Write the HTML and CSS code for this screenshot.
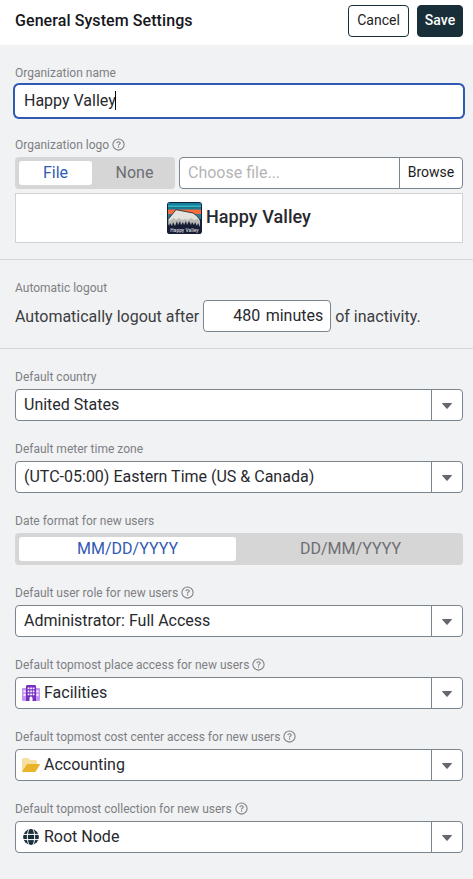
FILE: index.html
```html
<!DOCTYPE html>
<html lang="en">
<head>
<meta charset="utf-8">
<title>General System Settings</title>
<link rel="stylesheet" href="styles.css">
</head>
<body>
<svg class="defs" width="0" height="0" aria-hidden="true">
  <symbol id="help" viewBox="0 0 13 13">
    <circle cx="6.5" cy="6.5" r="5.6" fill="none" stroke="currentColor" stroke-width="1.05"/>
    <path d="M4.8 5.1C4.9 4.2 5.6 3.7 6.5 3.7S8.2 4.2 8.2 5.1C8.2 6.2 6.5 6.1 6.5 7.5" fill="none" stroke="currentColor" stroke-width="1.15"/>
    <circle cx="6.5" cy="9.1" r=".75" fill="currentColor"/>
  </symbol>
  <symbol id="caret" viewBox="0 0 10 6"><path d="M.6 0h8.8q.9 0 .3.8L5.6 5.5q-.6.6-1.2 0L.3.8Q-.3 0 .6 0z" fill="currentColor"/></symbol>
</svg>
<header class="header">
  <h1 class="title">General System Settings</h1>
  <button class="btn">Cancel</button>
  <button class="btn btn-primary">Save</button>
</header>
<main>
  <section class="section">
    <div class="field">
      <div class="label">Organization name</div>
      <div class="input focused">Happy Valley<span class="cursor"></span></div>
    </div>
    <div class="field">
      <div class="label">Organization logo<svg class="help"><use href="#help"/></svg></div>
      <div class="row">
        <div class="toggle toggle-small"><span class="option active">File</span><span class="option">None</span></div>
        <div class="input file"><span class="placeholder">Choose file...</span><span class="browse">Browse</span></div>
      </div>
      <div class="preview">
        <svg class="logo" viewBox="0 0 35 32">
          <defs><clipPath id="round"><rect width="35" height="32" rx="3"/></clipPath></defs>
          <g clip-path="url(#round)">
            <path fill="#142040" d="M0 0h35v32H0z"/>
            <path fill="#157f9f" d="M1 1h33v3H1z"/>
            <path fill="#35b4c0" d="M1 3.5h33v2H1z"/>
            <path fill="#167b98" d="M1 5.5h33v2.5H1z"/>
            <path fill="#fa6c3a" d="M1 7.5h33v4.5H1z"/>
            <path fill="#287b91" d="M1 12h33v5H1z"/>
            <path fill="#e3e2dc" stroke="#1b2038" stroke-width=".8" d="M1 17.500l8-9.800 17 3.300q4 2 7 7v6H1z"/>
            <path fill="#b9b9b5" d="M2 19l5-3 2 2 3-2 3 2 3-1 3 1 3-2 3 2 3-1 3 2v6H2z"/>
            <path fill="#171d34" d="M0 25l1-3 1 2 1-3 2 3 1-4 2 4 2-5 1 4 2-4 1 4 2-3 1 3 2-4 1 4 2-4 2 4 1-3 2 3 1-3 2 4 1-3 2 4 1-3v12H0z"/>
            <text class="logo-text" x="17.5" y="29.7" text-anchor="middle">Happy Valley</text>
          </g>
        </svg>
        <span>Happy Valley</span>
      </div>
    </div>
  </section>
  <section class="section">
    <div class="field">
      <div class="label">Automatic logout</div>
      <div class="row sentence">
        <span class="words">Automatically logout after</span>
        <div class="input minutes"><span class="number">480</span><span class="unit">minutes</span></div>
        <span class="words">of inactivity.</span>
      </div>
    </div>
  </section>
  <section class="section">
    <div class="field">
      <div class="label">Default country</div>
      <div class="input select"><span class="value">United States</span><span class="arrow"><svg><use href="#caret"/></svg></span></div>
    </div>
    <div class="field">
      <div class="label">Default meter time zone</div>
      <div class="input select"><span class="value">(UTC-05:00) Eastern Time (US &amp; Canada)</span><span class="arrow"><svg><use href="#caret"/></svg></span></div>
    </div>
    <div class="field">
      <div class="label">Date format for new users</div>
      <div class="toggle"><span class="option active">MM/DD/YYYY</span><span class="option">DD/MM/YYYY</span></div>
    </div>
    <div class="field">
      <div class="label">Default user role for new users<svg class="help"><use href="#help"/></svg></div>
      <div class="input select"><span class="value">Administrator: Full Access</span><span class="arrow"><svg><use href="#caret"/></svg></span></div>
    </div>
    <div class="field">
      <div class="label">Default topmost place access for new users<svg class="help"><use href="#help"/></svg></div>
      <div class="input select with-icon">
        <svg class="icon" viewBox="0 0 18 16">
          <path fill="#c193f2" fill-rule="evenodd" d="M1.2 3H5v13H1.2Q0 16 0 14.8V4.2Q0 3 1.2 3zM1.5 5.5v1.7h2V5.5zM1.5 9v1.7h2V9zM13 3h3.8Q18 3 18 4.2v10.6q0 1.2-1.2 1.2H13zM14.5 5.5v1.7h2V5.5zM14.5 9v1.7h2V9z"/>
          <path fill="#782fc0" fill-rule="evenodd" d="M5.3 0h7.4Q14 0 14 1.3V16h-3.5v-3q0-1.5-1.5-1.5T7.5 13v3H4V1.3Q4 0 5.3 0zM5.7 2.5v1.8h1.7V2.5zM8.2 2.5v1.8h1.7V2.5zM10.7 2.5v1.8h1.7V2.5zM5.7 5.5v1.8h1.7V5.5zM8.2 5.5v1.8h1.7V5.5zM10.7 5.5v1.8h1.7V5.5zM5.7 8.5v1.7h1.7V8.5zM8.2 8.5v1.7h1.7V8.5zM10.7 8.5v1.7h1.7V8.5z"/>
        </svg>
        <span class="value">Facilities</span><span class="arrow"><svg><use href="#caret"/></svg></span></div>
    </div>
    <div class="field">
      <div class="label">Default topmost cost center access for new users<svg class="help"><use href="#help"/></svg></div>
      <div class="input select with-icon">
        <svg class="icon" viewBox="0 0 18 16">
          <path fill="#f6dfa2" d="M1.5 1H6l2 2h5.500Q15 3 15 4.500V7H6Q4.800 7 4.200 8L0 14.500v-12Q0 1 1.500 1z"/>
          <path fill="#e8b52a" d="M5.800 7h11.500q1 0 .5.900l-3.700 6.200q-.5.900-1.600.9H.8q-1 0-.5-.9L4.200 7.900Q4.700 7 5.800 7z"/>
        </svg>
        <span class="value">Accounting</span><span class="arrow"><svg><use href="#caret"/></svg></span></div>
    </div>
    <div class="field">
      <div class="label">Default topmost collection for new users<svg class="help"><use href="#help"/></svg></div>
      <div class="input select with-icon">
        <svg class="icon" viewBox="0 0 18 16">
          <circle cx="9" cy="8" r="7.900" fill="#182f3a"/>
          <path fill="none" stroke="#fff" stroke-width="1" d="M1 5.400h16M1 10.600h16M7 0C4.800 4.500 4.800 11.500 7 16M11 0c2.200 4.500 2.200 11.500 0 16"/>
        </svg>
        <span class="value">Root Node</span><span class="arrow"><svg><use href="#caret"/></svg></span></div>
    </div>
  </section>
</main>
</body>
</html>
```
FILE: styles.css
```css
* { box-sizing: border-box; }
body {
  margin: 0;
  background: #f1f2f4;
  color: #28292e;
  font: 16px/20px Roboto, "Liberation Sans", sans-serif;
}
.defs { display: none; }
svg { flex: none; }
.header {
  display: flex;
  align-items: center;
  gap: 8px;
  height: 45px;
  padding: 0 10px 4px 15px;
  background: #fff;
}
.title {
  flex: 1;
  margin: 0;
  font-size: 16px;
  font-weight: 500;
  line-height: 20px;
  letter-spacing: .08px;
  color: #16171c;
}
.btn {
  width: 61px;
  height: 32px;
  padding: 0 0 2px;
  border: 1px solid #182f3a;
  border-radius: 4px;
  background: #fff;
  color: #1c1d22;
  font: 14px/20px Roboto, sans-serif;
}
.btn-primary {
  width: 46px;
  background: #182f3a;
  color: #fff;
  font-weight: 500;
}
.section {
  display: flex;
  flex-direction: column;
  gap: 20px;
  padding: 20px 10px 16px 15px;
}
.section + .section { border-top: 1px solid #d3d5d8; }
.field { display: flex; flex-direction: column; gap: 4px; }
.label {
  display: flex;
  align-items: flex-start;
  gap: 3px;
  height: 16px;
  font-size: 12px;
  line-height: 16px;
  color: #7e7f83;
}
.help { width: 13px; height: 13px; margin-top: 1px; }
.row { display: flex; gap: 4px; }
.input {
  display: flex;
  height: 32px;
  padding: 5px 8px;
  border: 1px solid #768590;
  border-radius: 4px;
  background: #fff;
  white-space: nowrap;
}
.focused {
  border-color: #fff;
  box-shadow: 0 0 0 2px #315ab3;
}
.cursor { width: 1px; height: 19px; margin-left: -1px; background: #000; }
.toggle {
  display: grid;
  grid-template-columns: calc(50% - 3px) 1fr;
  gap: 6px;
  height: 32px;
  padding: 4px;
  border-radius: 4px;
  background: #d6d6d6;
}
.toggle-small { width: 160px; }
.option {
  border-radius: 3px;
  padding-top: 2px;
  text-align: center;
  color: #6d6e73;
}
.option.active { background: #fff; color: #315ab3; }
.file { flex: 1; padding: 0 0 0 8px; }
.placeholder { flex: 1; padding-top: 5px; color: #b4b4b6; }
.browse {
  width: 63px;
  padding: 4px 0 0;
  border-left: 1px solid #768590;
  text-align: center;
  font-size: 14px;
  color: #1c1d22;
}
.preview {
  display: flex;
  align-items: center;
  justify-content: center;
  gap: 4px;
  height: 50px;
  border: 1px solid #d0d3d6;
  background: #fff;
  font-size: 18px;
  font-weight: 500;
  letter-spacing: .05px;
}
.preview span { padding-bottom: 3px; }
.logo { width: 35px; height: 32px; }
.logo-text { fill: #d8d9df; font: 500 4.8px Roboto, sans-serif; }
.sentence { align-items: center; color: #3c3d42; }
.words { padding-top: 2px; }
.minutes { width: 128px; padding-right: 7px; gap: 5.5px; justify-content: flex-end; color: #28292e; }
.select { padding: 0 0 0 8px; }
.value { flex: 1; padding-top: 5px; }
.arrow {
  width: 31px;
  padding: 13px 0 0 10px;
  border-left: 1px solid #768590;
  color: #66676c;
}
.arrow svg { display: block; width: 10px; height: 6px; }
.with-icon { padding-left: 6px; }
.icon { width: 18px; height: 16px; margin: 7px 4px 0 0; }
```
